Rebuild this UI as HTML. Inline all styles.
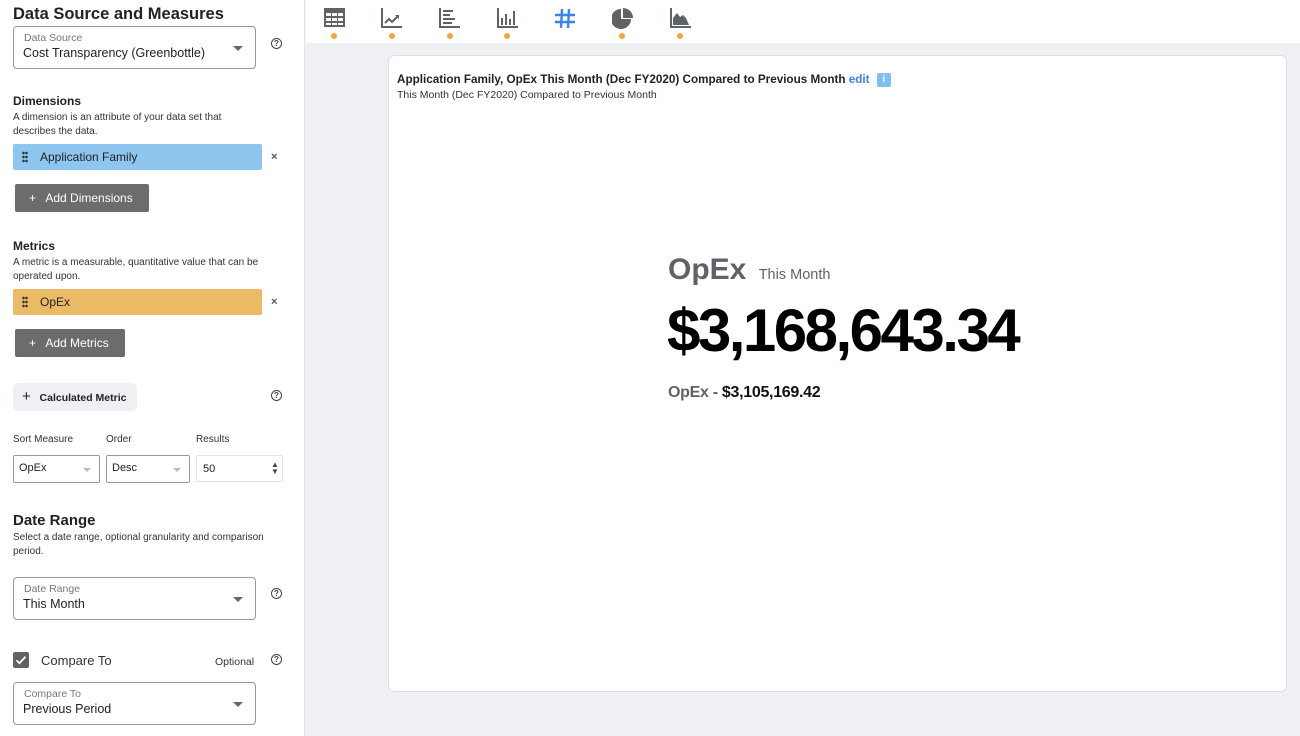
<!DOCTYPE html>
<html><head><meta charset="utf-8"><style>
*{box-sizing:border-box;margin:0;padding:0}
body{width:1300px;height:736px;overflow:hidden;font-family:"Liberation Sans",sans-serif;background:#eef0f3;position:relative;color:#222}
.left{position:absolute;left:0;top:0;width:305px;height:736px;background:#fff;border-right:1px solid #e3e5e8}
.a{position:absolute}
h1{position:absolute;font-size:16px;font-weight:bold;color:#222}
.lbl{font-size:12px;font-weight:bold;color:#222}
.desc{font-size:10px;color:#333;line-height:14px}
.sel{position:absolute;border:1px solid #999;border-radius:4px;background:#fff}
.sel .s{position:absolute;left:10px;top:5px;font-size:10.5px;color:#777}
.sel .v{position:absolute;left:9px;top:19px;font-size:12.5px;color:#222}
.caret{position:absolute;width:0;height:0;border-left:5px solid transparent;border-right:5px solid transparent;border-top:5px solid #666}
.q{position:absolute;width:11px;height:11px;border:1.3px solid #444;border-radius:50%;font-size:8px;line-height:9px;text-align:center;font-weight:bold;color:#444}
.pill{position:absolute;left:13px;width:249px;height:26px;border-radius:2px;font-size:12px;line-height:26px;padding-left:27px}
.dots{position:absolute;left:9px;top:7px;width:6px;height:12px;background:radial-gradient(circle,#333 1.2px,transparent 1.4px) 0 0/3px 4px}
.x{position:absolute;font-size:11px;font-weight:bold;color:#555}
.btn{position:absolute;left:15px;background:#6c6c6c;color:#fff;font-size:12px;border-radius:2px;height:28px;line-height:28px;padding-left:14px}
.top{position:absolute;left:306px;top:0;width:994px;height:43px;background:#fff}
.dot{position:absolute;top:33px;width:6px;height:6px;border-radius:50%;background:#f0a93a}
.card{position:absolute;left:388px;top:55px;width:899px;height:637px;background:#fff;border:1px solid #dcdfe3;border-radius:6px}
</style></head><body>
<div class="left">
<h1 style="left:13px;top:5px;font-size:16.5px">Data Source and Measures</h1>
<div class="sel" style="left:13px;top:26px;width:243px;height:43px"><div class="s">Data Source</div><div class="v">Cost Transparency (Greenbottle)</div><div class="caret" style="left:219px;top:19px"></div></div>
<div class="q" style="left:271px;top:38px">?</div>
<div class="a lbl" style="left:13px;top:94px">Dimensions</div>
<div class="a desc" style="left:13px;top:111px;width:240px">A dimension is an attribute of your data set that describes the data.</div>
<div class="pill" style="top:144px;background:#8ec6ef">Application Family<div class="dots"></div></div>
<div class="x" style="left:271px;top:151px">×</div>
<div class="btn" style="top:184px;width:134px">+&nbsp;&nbsp; Add Dimensions</div>
<div class="a lbl" style="left:13px;top:239px">Metrics</div>
<div class="a desc" style="left:13px;top:256px;width:275px">A metric is a measurable, quantitative value that can be operated upon.</div>
<div class="pill" style="top:289px;background:#eaba66">OpEx<div class="dots"></div></div>
<div class="x" style="left:271px;top:296px">×</div>
<div class="btn" style="top:329px;width:110px">+&nbsp;&nbsp; Add Metrics</div>
<div class="a" style="left:13px;top:383px;width:124px;height:28px;background:#eef0f3;border-radius:6px;font-size:10.5px;font-weight:bold;line-height:28px;padding-left:9px"><span style="font-size:15px;font-weight:normal">+</span>&nbsp;&nbsp; Calculated Metric</div>
<div class="q" style="left:271px;top:390px">?</div>
<div class="a desc" style="left:13px;top:433px">Sort Measure</div>
<div class="a desc" style="left:106px;top:433px">Order</div>
<div class="a desc" style="left:196px;top:433px">Results</div>
<div class="sel" style="left:13px;top:455px;width:87px;height:28px;border-radius:2px"><div class="a" style="left:5px;top:6px;font-size:11px">OpEx</div><div class="caret" style="left:69px;top:12px;border-top-color:#bbb;border-width:4px 4px 0"></div></div>
<div class="sel" style="left:106px;top:455px;width:84px;height:28px;border-radius:2px"><div class="a" style="left:5px;top:6px;font-size:11px">Desc</div><div class="caret" style="left:66px;top:12px;border-top-color:#bbb;border-width:4px 4px 0"></div></div>
<div class="sel" style="left:196px;top:455px;width:87px;height:27px;border-radius:2px;border-color:#e3e3e3"><div class="a" style="left:6px;top:7px;font-size:11px">50</div><div class="a" style="left:74px;top:5px;font-size:8px;color:#444;line-height:7px">▲<br>▼</div></div>
<h1 style="left:13px;top:512px;font-size:15px">Date Range</h1>
<div class="a desc" style="left:13px;top:531px;width:280px">Select a date range, optional granularity and comparison period.</div>
<div class="sel" style="left:13px;top:577px;width:243px;height:43px"><div class="s">Date Range</div><div class="v">This Month</div><div class="caret" style="left:219px;top:19px"></div></div>
<div class="q" style="left:271px;top:588px">?</div>
<div class="a" style="left:13px;top:652px;width:16px;height:16px;background:#5f6368;border-radius:2px"><svg width="16" height="16"><path d="M3.5 8.2l3 3 6-6.5" stroke="#fff" stroke-width="1.8" fill="none"/></svg></div>
<div class="a" style="left:41px;top:653px;font-size:13px;color:#333">Compare To</div>
<div class="a" style="left:215px;top:656px;font-size:10.5px;color:#333">Optional</div>
<div class="q" style="left:271px;top:654px">?</div>
<div class="sel" style="left:13px;top:682px;width:243px;height:43px"><div class="s">Compare To</div><div class="v">Previous Period</div><div class="caret" style="left:219px;top:19px"></div></div>
</div>
<div class="top">
<svg class="a" style="left:18px;top:8px" width="22" height="20"><rect x="0" y="0" width="21" height="19" fill="#5f6368"/><g fill="#fff"><rect x="2" y="5" width="5" height="3"/><rect x="8" y="5" width="5" height="3"/><rect x="14" y="5" width="5" height="3"/><rect x="2" y="10" width="5" height="3"/><rect x="8" y="10" width="5" height="3"/><rect x="14" y="10" width="5" height="3"/><rect x="2" y="15" width="5" height="2"/><rect x="8" y="15" width="5" height="2"/><rect x="14" y="15" width="5" height="2"/></g></svg>
<svg class="a" style="left:75px;top:8px" width="22" height="20"><path d="M1 0v19h20" stroke="#5f6368" stroke-width="2" fill="none"/><path d="M4 15l4-4 3 3 6-6" stroke="#5f6368" stroke-width="2" fill="none"/><path d="M14 7h4v4z" fill="#5f6368"/></svg>
<svg class="a" style="left:133px;top:8px" width="22" height="20"><path d="M1 0v19h20" stroke="#5f6368" stroke-width="2" fill="none"/><g stroke="#5f6368" stroke-width="2"><path d="M4 3h10M4 7h7M4 11h12M4 15h9"/></g></svg>
<svg class="a" style="left:191px;top:8px" width="22" height="20"><path d="M1 0v19h20" stroke="#5f6368" stroke-width="2" fill="none"/><g stroke="#5f6368" stroke-width="2"><path d="M5 17v-7M9 17v-11M13 17v-6M17 17v-14"/></g></svg>
<svg class="a" style="left:249px;top:9px" width="20" height="19"><g stroke="#3b82f6" stroke-width="2.4"><path d="M7 0l-1 19M14 0l-1 19M0 6h20M0 13h20"/></g></svg>
<svg class="a" style="left:306px;top:8px" width="22" height="22"><path d="M9 1a10 10 0 1 0 10 10h-10z" fill="#5f6368"/><path d="M11 0a10 10 0 0 1 10 10h-10z" fill="#5f6368"/></svg>
<svg class="a" style="left:364px;top:8px" width="22" height="20"><path d="M1 0v19h20" stroke="#5f6368" stroke-width="2" fill="none"/><path d="M3 17v-7l4-5 3 4 3-2 3 3 3 7z" fill="#5f6368"/></svg>
<div class="dot" style="left:25px"></div><div class="dot" style="left:83px"></div><div class="dot" style="left:141px"></div><div class="dot" style="left:198px"></div><div class="dot" style="left:313px"></div><div class="dot" style="left:371px"></div>
</div>
<div class="card">
<div class="a" style="left:8px;top:17px;font-size:11.7px;font-weight:bold;color:#222">Application Family, OpEx This Month (Dec FY2020) Compared to Previous Month <span style="color:#3b82f6">edit</span> <span style="display:inline-block;width:14px;height:14px;background:#7cc0f0;border-radius:2px;color:#fff;font-size:10px;text-align:center;line-height:14px;vertical-align:1px;margin-left:4px">i</span></div>
<div class="a" style="left:8px;top:33px;font-size:10.5px;color:#333">This Month (Dec FY2020) Compared to Previous Month</div>
<div class="a" style="left:279px;top:197px;font-size:30px;font-weight:bold;color:#5f6368">OpEx <span style="font-size:14.5px;font-weight:normal;margin-left:4px">This Month</span></div>
<div class="a" style="left:278px;top:240px;font-size:60px;font-weight:bold;color:#000;letter-spacing:-2.5px">$3,168,643.34</div>
<div class="a" style="left:279px;top:328px;font-size:16px;color:#5f6368;font-weight:bold;letter-spacing:-0.3px">OpEx - <span style="color:#111">$3,105,169.42</span></div>
</div>
</body></html>
